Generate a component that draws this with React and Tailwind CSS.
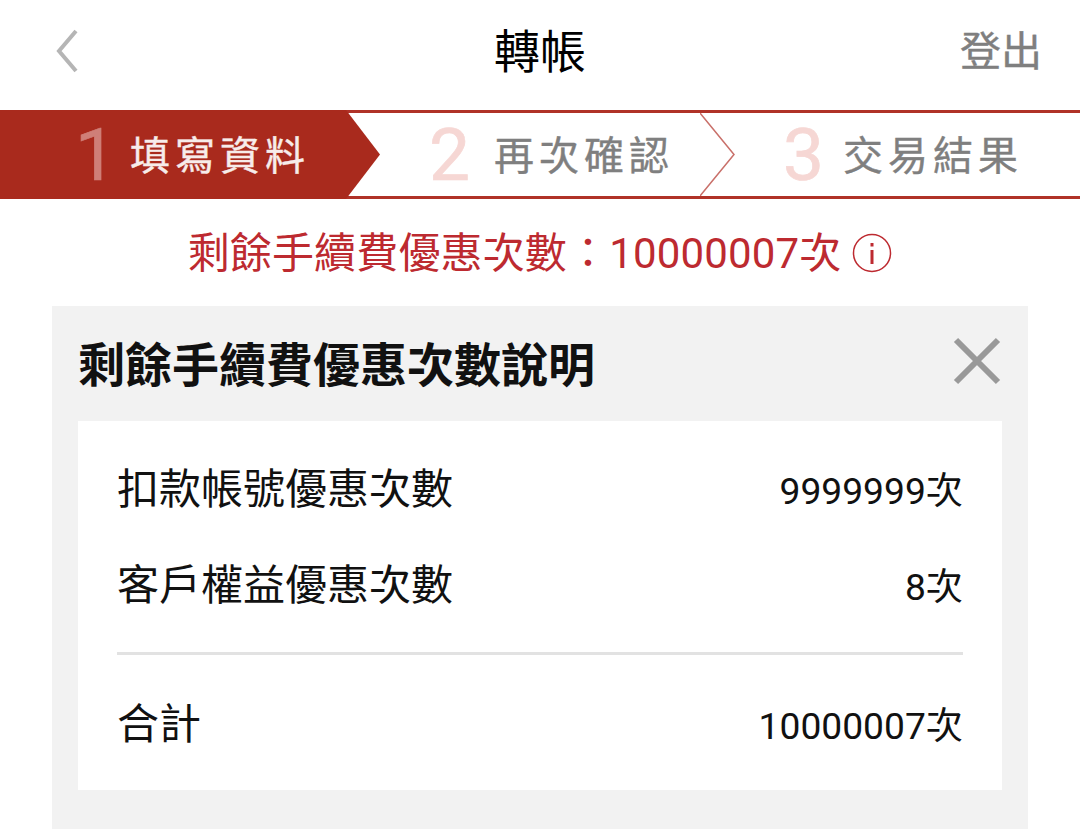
function Step({ n, label, digitClass, textClass, gap }) {
  return (
    <div className="flex items-center">
      <span className={`text-[73px] leading-none font-normal mt-[2px] [-webkit-text-stroke:0.7px_currentColor] ${digitClass}`}>{n}</span>
      <span className={`text-[40px] leading-none tracking-[5px] whitespace-nowrap mt-[4px] [-webkit-text-stroke:0.4px_currentColor] ${gap} ${textClass}`}>{label}</span>
    </div>
  );
}

function Row({ label, value, className = "" }) {
  return (
    <div className={`flex items-center justify-between text-[#111111] ${className}`}>
      <span className="text-[42px] leading-none">{label}</span>
      <span className="text-[37.2px] leading-none mt-[3px]">{value}</span>
    </div>
  );
}

export default function App() {
  return (
    <div className="w-[1080px] h-[829px] overflow-hidden bg-white font-['Roboto','Noto_Sans_CJK_TC',sans-serif]">
      <header className="h-[110px] flex items-center justify-between pl-[55px] pr-[38px] relative">
        <svg width="24" height="44" viewBox="0 0 24 44" className="mt-[-9px]">
          <path d="M21 2 L4 22 L21 42" fill="none" stroke="#b5b5b5" strokeWidth="4" />
        </svg>
        <h1 className="absolute left-0 right-0 text-center text-[46px] leading-none font-normal text-black mt-[-7px]">轉帳</h1>
        <span className="text-[41px] leading-none text-[#7f7f7f] mt-[-6px] [-webkit-text-stroke:0.4px_currentColor]">登出</span>
      </header>

      <div className="h-[89px] flex border-y-[3px] border-[#b03228] relative">
        <div className="w-[346px] shrink-0 bg-[#a92a1d] -my-[3px] pl-[75px] flex items-center relative">
          <Step n="1" label="填寫資料" digitClass="text-[#cf7f78]" textClass="text-[#f7ecea]" gap="ml-[14px]" />
          <svg width="36" height="89" viewBox="0 0 36 89" className="absolute left-[346px] top-0">
            <path d="M0 0 L34 44.5 L0 89 Z" fill="#a92a1d" />
          </svg>
        </div>
        <div className="w-[355px] shrink-0 pl-[83px] flex items-center relative">
          <Step n="2" label="再次確認" digitClass="text-[#f6d7d4]" textClass="text-[#7f7f7f]" gap="ml-[24px]" />
          <svg width="36" height="83" viewBox="0 0 36 83" className="absolute right-[-35px] top-0">
            <path d="M0 0 L34 41.5 L0 83" fill="none" stroke="#c9706a" strokeWidth="1.5" />
          </svg>
        </div>
        <div className="flex-1 pl-[82px] flex items-center">
          <Step n="3" label="交易結果" digitClass="text-[#f6d7d4]" textClass="text-[#7f7f7f]" gap="ml-[19px]" />
        </div>
      </div>

      <div className="h-[107px] flex items-center justify-center text-[#bd2a30] text-[42px] leading-none">
        <span className="mt-[2px] whitespace-nowrap tracking-[0.15px]">剩餘手續費優惠次數：10000007次</span>
        <svg width="40" height="40" viewBox="0 0 40 40" className="ml-[11px]">
          <circle cx="20" cy="20" r="18.5" fill="none" stroke="#bd2a30" strokeWidth="1.5" />
          <rect x="18.5" y="17" width="3" height="14" fill="#bd2a30" />
          <rect x="18.5" y="10" width="3" height="3.5" fill="#bd2a30" />
        </svg>
      </div>

      <section className="mx-[52px] h-[523px] bg-[#f2f2f2] px-[26px]">
        <div className="h-[115px] flex items-center justify-between">
          <h2 className="text-[47px] leading-none font-bold text-[#111111] whitespace-nowrap mt-[3px]">剩餘手續費優惠次數說明</h2>
          <svg width="48" height="48" viewBox="0 0 48 48" className="mt-[-6px] mr-[1px]">
            <path d="M3 3 L45 45 M45 3 L3 45" fill="none" stroke="#999999" strokeWidth="6" />
          </svg>
        </div>
        <div className="h-[369px] bg-white px-[39px] pt-[48px]">
          <Row label="扣款帳號優惠次數" value="9999999次" />
          <Row label="客戶權益優惠次數" value="8次" className="mt-[54px]" />
          <div className="mt-[45px] h-[3px] bg-[#e2e2e2]" />
          <Row label="合計" value="10000007次" className="mt-[49px]" />
        </div>
      </section>
    </div>
  );
}
